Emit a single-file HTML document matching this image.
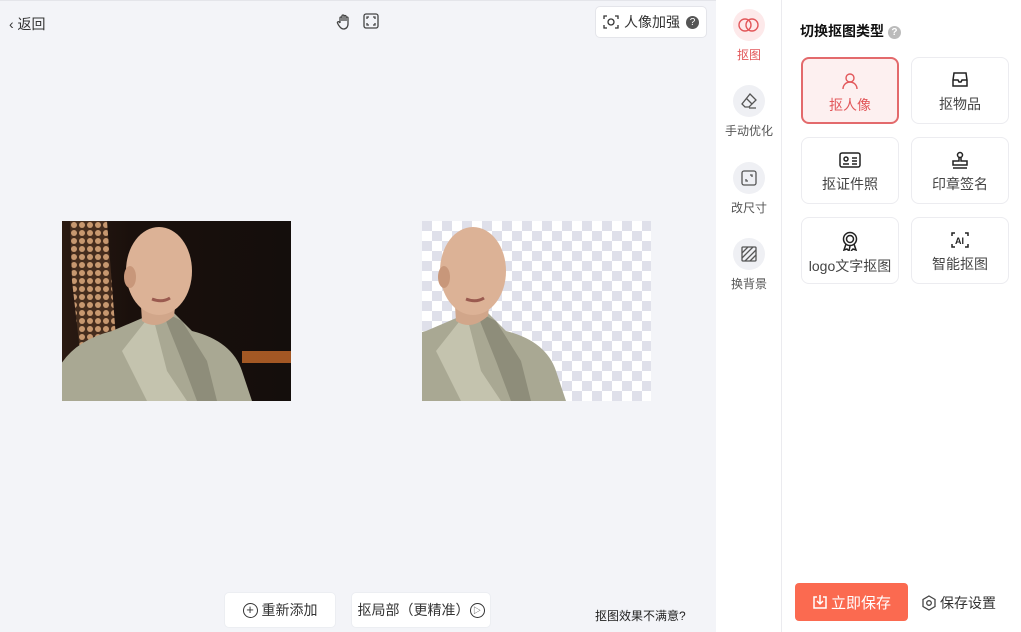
<!DOCTYPE html>
<html><head><meta charset="utf-8"><style>
*{box-sizing:border-box;margin:0;padding:0}
body{width:1021px;height:632px;overflow:hidden;background:#f3f4f8;font-family:"Liberation Sans","Noto Sans CJK SC",sans-serif;position:relative;color:#333}
.abs{position:absolute}
.mid{background:#fff;left:716px;top:0;width:66px;height:632px;border-right:1px solid #ebebef}
.right{background:#fff;left:782px;top:0;width:239px;height:632px}
.tool{position:absolute;left:716px;width:66px;text-align:center;font-size:12px;color:#555}
.tool .c{width:32px;height:32px;border-radius:50%;background:#eff0f4;margin:0 auto 5px;display:flex;align-items:center;justify-content:center}
.card{position:absolute;width:98px;height:67px;border:1.5px solid #ececf0;border-radius:8px;background:#fff;text-align:center;font-size:14px;color:#444;padding-top:13px}
.card svg{display:block;margin:0 auto 5px}
.btn{position:absolute;background:#fff;border-radius:5px;border:1px solid #eceef2;font-size:14px;color:#333;display:flex;align-items:center;justify-content:center}
</style></head><body>
<div class="abs" style="left:0;top:0;width:716px;height:1px;background:#e4e5ea"></div>
<div class="abs" style="left:9px;top:14px;font-size:14px;color:#333">&#8249;&nbsp;返回</div>
<svg class="abs" style="left:335px;top:13px" width="18" height="18" viewBox="0 0 18 18" fill="none" stroke="#444" stroke-width="1.3"><path d="M5 10V5a1 1 0 012 0v3V3a1 1 0 012 0v5V3.5a1 1 0 012 0V8V5a1 1 0 012 0v6c0 3-2 5-4.5 5S5 14 3.5 12l-1-2a1 1 0 011.7-1L5 10"/></svg>
<svg class="abs" style="left:363px;top:13px" width="16" height="16" viewBox="0 0 16 16" fill="none" stroke="#444" stroke-width="1.3"><rect x="1" y="1" width="14" height="14" rx="2"/><path d="M4 6V4h2M10 4h2v2M12 10v2h-2M6 12H4v-2"/></svg>
<div class="btn" style="left:595px;top:6px;width:112px;height:32px;border-color:#e4e5ea">
<svg width="16" height="16" viewBox="0 0 16 16" fill="none" stroke="#333" stroke-width="1.3" style="margin-right:5px"><path d="M1 5V2h3M12 2h3v3M15 11v3h-3M4 14H1v-3"/><circle cx="8" cy="8" r="3"/></svg>人像加强<span style="display:inline-block;width:13px;height:13px;border-radius:50%;background:#555;color:#fff;font-size:10px;line-height:13px;text-align:center;margin-left:6px">?</span></div>

<svg class="abs" style="left:62px;top:221px" width="229" height="180">
<defs>
<linearGradient id="bg" x1="0" x2="1"><stop offset="0" stop-color="#2a1a12"/><stop offset=".3" stop-color="#1a100c"/><stop offset="1" stop-color="#140e0c"/></linearGradient>
<pattern id="dots" width="8" height="8" patternUnits="userSpaceOnUse"><rect width="8" height="8" fill="#4a3020"/><circle cx="4" cy="4" r="3" fill="#d9a67a"/></pattern>
<g id="fig">
<path d="M-5 180 L-5 150 Q10 120 50 110 L85 95 L110 90 L130 110 Q170 120 180 150 L190 180Z" fill="#a9a893"/>
<path d="M60 130 L90 92 L105 150 L125 180 L85 180Z" fill="#c4c3ae"/>
<path d="M100 90 L120 100 L145 140 L155 180 L135 180 L120 140Z" fill="#8e8d7a"/>
<path d="M78 70 L80 100 Q95 110 112 95 L115 70Z" fill="#d1a68a"/>
<ellipse cx="97" cy="50" rx="33" ry="44" fill="#dcb296"/>
<ellipse cx="68" cy="56" rx="6" ry="11" fill="#c8977a"/>
<path d="M90 78 Q100 82 108 77" stroke="#9a5a4f" stroke-width="3" fill="none"/>
</g>
</defs>
<rect width="229" height="180" fill="url(#bg)"/>
<path d="M8 0 L45 0 L55 130 L18 130 L10 60Z" fill="url(#dots)" opacity=".9"/>
<rect x="180" y="130" width="49" height="12" fill="#c76a2a" opacity=".8"/>
<use href="#fig"/>
</svg>
<svg class="abs" style="left:422px;top:221px" width="229" height="180">
<defs><pattern id="ck" width="20" height="20" patternUnits="userSpaceOnUse"><rect width="20" height="20" fill="#fff"/><rect width="10" height="10" fill="#dfe0ea"/><rect x="10" y="10" width="10" height="10" fill="#dfe0ea"/></pattern></defs>
<rect width="229" height="180" fill="url(#ck)"/>
<use href="#fig" transform="translate(-46,0)"/>
</svg>

<div class="btn" style="left:224px;top:592px;width:112px;height:36px"><span style="display:inline-block;width:15px;height:15px;border:1.3px solid #333;border-radius:50%;font-size:13px;line-height:12px;text-align:center;margin-right:4px">+</span>重新添加</div>
<div class="btn" style="left:351px;top:592px;width:140px;height:36px">抠局部（更精准）<span style="display:inline-block;width:15px;height:15px;border:1.3px solid #333;border-radius:50%;font-size:8px;line-height:13px;text-align:center">&#9655;</span></div>
<div class="abs" style="left:595px;top:607px;font-size:12px;color:#222">抠图效果不满意?</div>

<div class="abs mid"></div>
<div class="abs right"></div>
<div class="tool" style="top:9px;color:#e2575a"><div class="c" style="background:#fde9ea"><svg width="24" height="16" viewBox="0 0 24 16" fill="none" stroke="#e2575a" stroke-width="1.4"><circle cx="8" cy="8" r="6"/><circle cx="15" cy="8" r="6"/></svg></div>抠图</div>
<div class="tool" style="top:85px"><div class="c"><svg width="18" height="18" viewBox="0 0 18 18" fill="none" stroke="#555" stroke-width="1.3"><path d="M10 2l6 6-7 7H5l-3-3z M6 6l6 6 M9 16h7"/></svg></div>手动优化</div>
<div class="tool" style="top:162px"><div class="c"><svg width="18" height="18" viewBox="0 0 18 18" fill="none" stroke="#555" stroke-width="1.3"><rect x="2" y="2" width="14" height="14" rx="2"/><path d="M6 10v2h2M10 6h2v2"/></svg></div>改尺寸</div>
<div class="tool" style="top:238px"><div class="c"><svg width="18" height="18" viewBox="0 0 18 18" fill="none" stroke="#555" stroke-width="1.3"><rect x="2" y="2" width="14" height="14" rx="1"/><path d="M2 8l6-6M2 13L13 2M5 16L16 5M10 16l6-6"/></svg></div>换背景</div>

<div class="abs" style="left:800px;top:21px;font-size:14px;font-weight:bold;color:#111">切换抠图类型 <span style="display:inline-block;width:13px;height:13px;border-radius:50%;background:#bbb;color:#fff;font-size:10px;line-height:13px;text-align:center;vertical-align:1px">?</span></div>
<div class="card" style="left:801px;top:57px;border:2px solid #e36a6c;background:#fdf0f0;color:#e2575a"><svg width="18" height="18" viewBox="0 0 18 18" fill="none" stroke="#e2575a" stroke-width="1.4"><circle cx="9" cy="6" r="4"/><path d="M2 17a7 7 0 0114 0"/></svg>抠人像</div>
<div class="card" style="left:911px;top:57px"><svg width="18" height="18" viewBox="0 0 18 18" fill="none" stroke="#222" stroke-width="1.5"><path d="M3 2h12l1 7v6H2V9z M2 9h5l1 2h2l1-2h5"/></svg>抠物品</div>
<div class="card" style="left:801px;top:137px"><svg width="22" height="18" viewBox="0 0 22 18" fill="none" stroke="#222" stroke-width="1.5"><rect x="1" y="2" width="20" height="14" rx="2"/><circle cx="7" cy="8" r="2"/><path d="M4 13h6M13 7h5M13 10h5M13 13h5"/></svg>抠证件照</div>
<div class="card" style="left:911px;top:137px"><svg width="20" height="18" viewBox="0 0 20 18" fill="none" stroke="#222" stroke-width="1.5"><circle cx="10" cy="4" r="2.5"/><path d="M9 6v4H3v4h14v-4h-6V6M3 17h14"/></svg>印章签名</div>
<div class="card" style="left:801px;top:217px"><svg width="18" height="20" viewBox="0 0 18 20" fill="none" stroke="#222" stroke-width="1.5"><circle cx="9" cy="8" r="6.5"/><circle cx="9" cy="8" r="3.5"/><path d="M5 13l-2 6 3-1 2 2 1-5M13 13l2 6-3-1-2 2"/></svg>logo文字抠图</div>
<div class="card" style="left:911px;top:217px"><svg width="20" height="18" viewBox="0 0 20 18" fill="none" stroke="#222" stroke-width="1.5"><path d="M2 5V2h3M15 2h3v3M18 13v3h-3M5 16H2v-3"/><text x="5" y="13" font-size="9" font-weight="bold" fill="#222" stroke="none" font-family="Liberation Sans">AI</text></svg>智能抠图</div>

<div class="abs" style="left:795px;top:583px;width:113px;height:38px;background:#fb6a50;border-radius:4px;color:#fff;font-size:15px;display:flex;align-items:center;justify-content:center"><svg width="16" height="16" viewBox="0 0 16 16" fill="none" stroke="#fff" stroke-width="1.5" style="margin-right:3px"><path d="M5 3H2v11h12V3h-3M8 1v9M5 7l3 3 3-3"/></svg>立即保存</div>
<div class="abs" style="left:921px;top:593px;font-size:14px;color:#333;display:flex;align-items:center"><svg width="16" height="16" viewBox="0 0 16 16" fill="none" stroke="#444" stroke-width="1.3" style="margin-right:3px"><path d="M8 1l6 3.5v7L8 15l-6-3.5v-7z"/><circle cx="8" cy="8" r="2.3"/></svg>保存设置</div>
</body></html>
